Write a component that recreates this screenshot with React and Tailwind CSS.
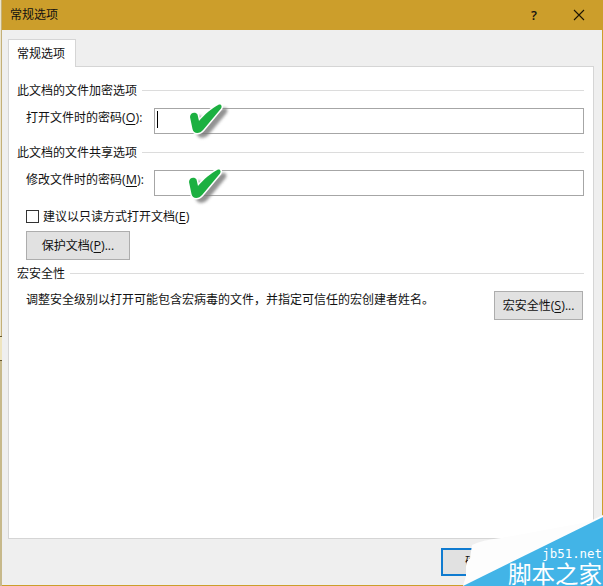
import React from "react";

function SectionHeading({ children }) {
  return (
    <div className="flex h-[18px] items-center gap-[5px]">
      <span className="whitespace-nowrap pt-[2px]">{children}</span>
      <span className="h-px flex-1 bg-[#dcdcdc]" />
    </div>
  );
}

function Key({ children }) {
  return (
    <span className="text-[12.5px]">
      (<span className="underline underline-offset-2">{children}</span>)
    </span>
  );
}

function CheckMark({ className }) {
  return (
    <svg className={className} width="56" height="48" viewBox="0 0 56 48">
      <defs>
        <filter id="soft" x="-30%" y="-30%" width="160%" height="160%">
          <feGaussianBlur stdDeviation="1.7" />
        </filter>
      </defs>
      <path
        d="M6 17C6 12 12 11.5 13.5 14.5L15 21C20 15 28 8 35 4.5C38 4 38 7 37 8.5L19.500 29.500C15.500 34.500 9.500 34 8.500 29Z"
        transform="translate(5 4)"
        fill="#777"
        stroke="#777"
        strokeWidth="1.5"
        opacity=".8"
        filter="url(#soft)"
      />
      <path
        d="M6 17C6 12 12 11.5 13.5 14.5L15 21C20 15 28 8 35 4.5C38 4 38 7 37 8.5L19.500 29.500C15.500 34.500 9.500 34 8.500 29Z"
        fill="#1cb041"
        stroke="#fff"
        strokeWidth="3"
        paintOrder="stroke"
        strokeLinejoin="round"
      />
    </svg>
  );
}

function PasswordRow({ label, hotkey, caret, markClass }) {
  return (
    <div className="mt-[9px] flex h-[26px] pl-[9px]">
      <label className="w-32 whitespace-nowrap pt-px leading-[18px]">
        {label}
        <Key>{hotkey}</Key>:
      </label>
      <div className="relative flex-1 border border-[#a6a6a6] bg-white">
        {caret && <span className="absolute left-[2px] top-[2px] h-[17px] w-px bg-black" />}
        <CheckMark className={markClass} />
      </div>
    </div>
  );
}

export default function App() {
  return (
    <div className="relative flex h-[586px] w-[603px] overflow-hidden bg-[#efefef] text-[12px] leading-[18px] text-[#111] [font-family:'Open_Sans','Noto_Sans_CJK_SC',sans-serif]">
      <div className="flex w-[2px] flex-col bg-[#c7b98b]">
        <div className="h-[336px] border-r border-[#c4b078] bg-[#ece5cd]" />
        <div className="h-px bg-[#65562e]" />
        <div className="h-[23px] bg-[#eee4bf]" />
        <div className="h-px bg-[#65562e]" />
      </div>

      <div className="flex min-w-0 flex-1 flex-col border-b border-r border-[#cc9e2b]">
        <header className="flex h-[30px] shrink-0 items-center bg-[#cc9e2b] pl-2">
          <span className="flex-1">常规选项</span>
          <span className="w-[10px] pb-px text-center text-[13px] font-semibold">?</span>
          <svg className="ml-[34px] mr-[17px]" width="12" height="12" viewBox="0 0 12 12">
            <path d="M1 1L11 11M11 1L1 11" stroke="#1c1503" strokeWidth="1.1" fill="none" />
          </svg>
        </header>

        <div className="flex flex-1 flex-col pl-[6px] pr-2 pt-[9px]">
          <div className="relative z-10 flex h-7 w-[68px] items-center border border-b-0 border-[#d5d5d5] bg-white pl-2">
            <span>常规选项</span>
          </div>
          <main className="-mt-px h-[473px] border border-[#d5d5d5] bg-white pl-2 pr-[9px] pt-[14px]">
            <SectionHeading>此文档的文件加密选项</SectionHeading>
            <PasswordRow
              label="打开文件时的密码"
              hotkey="O"
              caret
              markClass="absolute left-[29px] top-[-9px]"
            />
            <div className="h-[9px]" />
            <SectionHeading>此文档的文件共享选项</SectionHeading>
            <PasswordRow
              label="修改文件时的密码"
              hotkey="M"
              markClass="absolute left-[28px] top-[-6px]"
            />

            <div className="mt-3 flex h-[17px] items-center pl-[9px]">
              <span className="size-[13px] border border-[#333] bg-white" />
              <span className="ml-1">
                建议以只读方式打开文档<Key>E</Key>
              </span>
            </div>
            <div className="mt-[6px] flex pl-[9px]">
              <button className="h-[29px] w-[104px] border border-[#adadad] bg-[#e1e1e1]">
                保护文档<Key>P</Key>...
              </button>
            </div>

            <div className="h-1" />
            <SectionHeading>宏安全性</SectionHeading>
            <div className="mt-[9px] flex justify-between pl-[9px] pr-px">
              <p className="whitespace-nowrap">调整安全级别以打开可能包含宏病毒的文件，并指定可信任的宏创建者姓名。</p>
              <button className="h-[29px] w-[89px] whitespace-nowrap border border-[#adadad] bg-[#e1e1e1]">
                宏安全性<Key>S</Key>...
              </button>
            </div>
          </main>
          <footer className="flex justify-end pr-16 pt-[9px]">
            <button className="h-[28px] w-[89px] border-2 border-[#0f7bd0] bg-[#e1e1e1] pl-[22px] text-left">
              确定
            </button>
          </footer>
        </div>
      </div>

      <div className="absolute bottom-0 right-0 h-[74px] w-[145px]">
        <svg className="absolute inset-0" width="145" height="74" viewBox="0 0 145 74">
          <path d="M145 3L130 10L43 26Q24 28 14 33L12 46Q8 50 8 54L8 64L5 74H20L145 12Z" fill="#fdfdfd" />
          <path d="M5 74L145 5V74Z" fill="#42b4e7" />
        </svg>
        <div className="absolute right-[1px] top-[35px] text-[12.400px] leading-[13px] text-white [font-family:'DejaVu_Sans_Mono',monospace]">
          jb51.net
        </div>
        <div className="absolute right-[1px] top-[48px] whitespace-nowrap text-[23.5px] leading-[26px] text-white [font-family:'Noto_Sans_CJK_SC',sans-serif]">
          脚本之家
        </div>
      </div>
    </div>
  );
}
